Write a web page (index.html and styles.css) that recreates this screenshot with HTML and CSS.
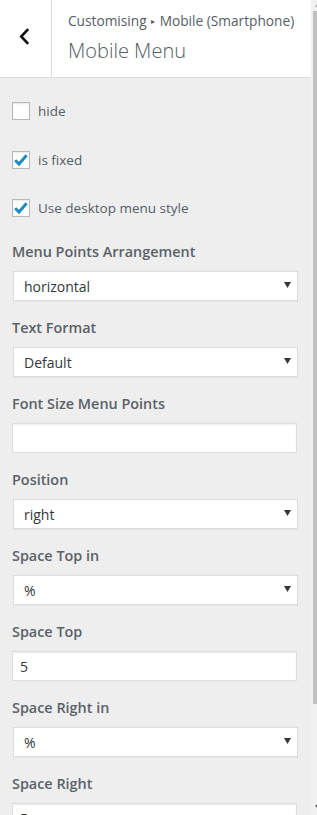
FILE: index.html
```html
<!DOCTYPE html>
<html lang="en">
<head>
    <meta charset="UTF-8">
    <meta name="viewport" content="width=device-width, initial-scale=1.0">
    <title>Mobile Menu - Customising</title>
    <link rel="stylesheet" href="styles.css">
</head>
<body>
    <div class="panel">
        <div class="panel-head">
            <button class="back" type="button" aria-label="Back">
                <svg width="11" height="17" viewBox="0 0 11 17"><path d="M9.2 1.2 L2.2 8.5 L9.2 15.8" fill="none" stroke="#111" stroke-width="2.6"/></svg>
            </button>
            <div class="panel-title">
                <span class="crumb">Customising <span class="sep">&#9656;</span> Mobile (Smartphone)</span>
                <h2>Mobile Menu</h2>
            </div>
        </div>

        <div class="controls">
            <div class="checks">
                <label class="check"><span class="box"></span>hide</label>
                <label class="check">
                    <span class="box"><svg width="16" height="16" viewBox="0 0 16 16"><path d="M2.2 8.2 L6 12 L13.6 3.2" fill="none" stroke="#1e8cbe" stroke-width="3"/></svg></span>is fixed
                </label>
                <label class="check">
                    <span class="box"><svg width="16" height="16" viewBox="0 0 16 16"><path d="M2.2 8.2 L6 12 L13.6 3.2" fill="none" stroke="#1e8cbe" stroke-width="3"/></svg></span>Use desktop menu style
                </label>
            </div>

            <div class="field">
                <span class="field-title">Menu Points Arrangement</span>
                <div class="select"><span>horizontal</span><svg class="caret" width="7" height="6" viewBox="0 0 7 6"><path d="M0 0 H7 L3.5 6 Z" fill="#32373c"/></svg></div>
            </div>
            <div class="field">
                <span class="field-title">Text Format</span>
                <div class="select"><span>Default</span><svg class="caret" width="7" height="6" viewBox="0 0 7 6"><path d="M0 0 H7 L3.5 6 Z" fill="#32373c"/></svg></div>
            </div>
            <div class="field">
                <span class="field-title">Font Size Menu Points</span>
                <input class="text" type="text" value="">
            </div>
            <div class="field">
                <span class="field-title">Position</span>
                <div class="select"><span>right</span><svg class="caret" width="7" height="6" viewBox="0 0 7 6"><path d="M0 0 H7 L3.5 6 Z" fill="#32373c"/></svg></div>
            </div>
            <div class="field">
                <span class="field-title">Space Top in</span>
                <div class="select"><span>%</span><svg class="caret" width="7" height="6" viewBox="0 0 7 6"><path d="M0 0 H7 L3.5 6 Z" fill="#32373c"/></svg></div>
            </div>
            <div class="field">
                <span class="field-title">Space Top</span>
                <input class="text" type="text" value="5">
            </div>
            <div class="field">
                <span class="field-title">Space Right in</span>
                <div class="select"><span>%</span><svg class="caret" width="7" height="6" viewBox="0 0 7 6"><path d="M0 0 H7 L3.5 6 Z" fill="#32373c"/></svg></div>
            </div>
            <div class="field">
                <span class="field-title">Space Right</span>
                <input class="text" type="text" value="5">
            </div>
        </div>
    </div>

    <div class="scrollbar">
        <span class="arrow up"></span>
        <div class="thumb"></div>
        <span class="arrow down"></span>
    </div>
</body>
</html>
```

FILE: styles.css
```css
body {
    margin: 0;
    height: 815px;
    overflow: hidden;
    display: flex;
    background-color: #eee;
    font-family: "Open Sans", "Noto Sans", sans-serif;
    color: #555d66;
}
.panel {
    width: 311px;
    flex-shrink: 0;
}
.panel-head {
    display: flex;
    height: 77px;
    background-color: #fff;
    border-bottom: 1px solid #ddd;
}
.back {
    width: 52px;
    flex-shrink: 0;
    display: flex;
    align-items: center;
    justify-content: center;
    padding: 0 3px 4px 0;
    margin: 0;
    background: #fff;
    border: none;
    border-right: 1px solid #ddd;
    cursor: pointer;
}
.panel-title {
    padding: 11px 0 0 16px;
}
.crumb {
    display: block;
    font-size: 13.7px;
    line-height: 20px;
    white-space: nowrap;
}
.crumb .sep {
    font-size: 8px;
    vertical-align: 2px;
    margin: 0 1px;
}
.panel-title h2 {
    margin: 6px 0 0;
    font-size: 20px;
    font-weight: 300;
    line-height: 28px;
}
.controls {
    padding: 24px 14px 0 12px;
}
.checks {
    display: flex;
    flex-direction: column;
    gap: 30.5px;
    margin-bottom: 25px;
}
.check {
    display: flex;
    align-items: center;
    height: 18px;
    font-size: 13.5px;
    cursor: pointer;
}
.box {
    width: 18px;
    height: 18px;
    box-sizing: border-box;
    margin-right: 8px;
    border: 1px solid #b4b9be;
    background-color: #fff;
    box-shadow: inset 0 1px 2px rgba(0, 0, 0, 0.1);
}
.box svg {
    display: block;
}
.field {
    margin-bottom: 17px;
}
.field-title {
    display: block;
    font-size: 14.4px;
    font-weight: 600;
    line-height: 20px;
    margin-bottom: 9px;
    color: #5a6168;
}
.select {
    display: flex;
    align-items: center;
    justify-content: space-between;
    width: 100%;
    height: 30px;
    box-sizing: border-box;
    margin-left: 1px;
    padding: 0 6px 0 10px;
    background-color: #fff;
    border: 1px solid #ddd;
    box-shadow: 0 1px 1px rgba(0, 0, 0, 0.04);
    font-size: 14px;
    color: #32373c;
}
.caret {
    margin-bottom: 2px;
}
.text {
    display: block;
    width: 100%;
    height: 30px;
    box-sizing: border-box;
    margin: 0;
    padding: 0 7px;
    background-color: #fff;
    border: 1px solid #ddd;
    border-radius: 0;
    box-shadow: inset 0 1px 2px rgba(0, 0, 0, 0.07);
    font-family: inherit;
    font-size: 14px;
    color: #32373c;
}
.scrollbar {
    width: 6px;
    display: flex;
    flex-direction: column;
    background-color: #f1f1f1;
}
.thumb {
    height: 694px;
    margin-left: 2px;
    background-color: #c1c1c1;
}
.arrow {
    height: 11px;
    position: relative;
}
.arrow::after {
    content: "";
    position: absolute;
    left: 4px;
    border-left: 2px solid transparent;
    border-right: 2px solid transparent;
}
.arrow.up::after {
    top: 4px;
    border-bottom: 3px solid #a3a3a3;
}
.arrow.down {
    margin-top: 100px;
}
.arrow.down::after {
    top: 1px;
    border-top: 3px solid #505050;
}
```
